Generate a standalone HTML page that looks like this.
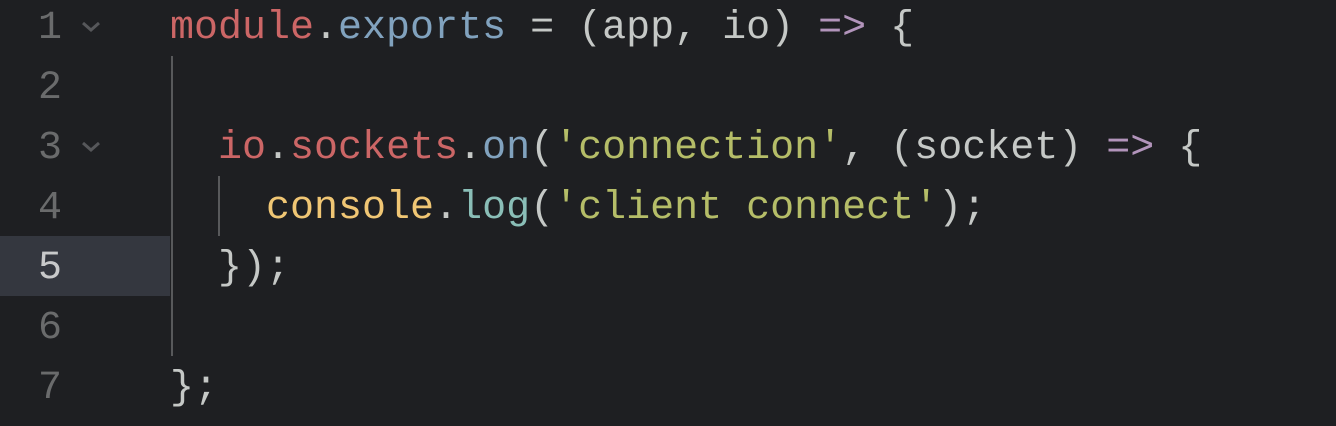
<!DOCTYPE html>
<html><head><meta charset="utf-8"><style>
html,body{margin:0;padding:0;width:1336px;height:426px;overflow:hidden;background:#1e1f22;}
body{position:relative;font-family:"Liberation Mono",monospace;font-size:40px;}
.ln{position:absolute;left:0;width:62px;text-align:right;color:#6a6b6c;line-height:60px;height:60px;}
.hl{position:absolute;left:0;top:236px;width:170px;height:60px;background:#34373f;}
.code{position:absolute;left:170px;white-space:pre;line-height:60px;color:#c5c8c6;}
.g{position:absolute;width:2px;background:#58595b;}
.fold{position:absolute;left:81px;width:20px;height:20px;}
.r{color:#cc6666}.b{color:#81a2be}.gr{color:#b5bd68}.y{color:#f0c674}.a{color:#8abeb7}.p{color:#b294bb}
</style></head><body>
<div class="hl"></div>
<div class="ln" style="top:-1px">1</div>
<div class="ln" style="top:59px">2</div>
<div class="ln" style="top:119px">3</div>
<div class="ln" style="top:179px">4</div>
<div class="ln" style="top:239px;color:#c8c9ca">5</div>
<div class="ln" style="top:299px">6</div>
<div class="ln" style="top:359px">7</div>
<svg class="fold" style="top:17px" viewBox="0 0 20 20"><path d="M2 6 L10 13 L18 6" fill="none" stroke="#56575a" stroke-width="3"/></svg>
<svg class="fold" style="top:137px" viewBox="0 0 20 20"><path d="M2 6 L10 13 L18 6" fill="none" stroke="#56575a" stroke-width="3"/></svg>
<div class="g" style="left:171px;top:56px;height:300px"></div>
<div class="g" style="left:218px;top:176px;height:60px"></div>
<div class="code" style="top:-1px"><span class="r">module</span>.<span class="b">exports</span> = (app, io) <span class="p">=&gt;</span> {</div>
<div class="code" style="top:119px">  <span class="r">io</span>.<span class="r">sockets</span>.<span class="b">on</span>(<span class="gr">'connection'</span>, (socket) <span class="p">=&gt;</span> {</div>
<div class="code" style="top:179px">    <span class="y">console</span>.<span class="a">log</span>(<span class="gr">'client connect'</span>);</div>
<div class="code" style="top:239px">  });</div>
<div class="code" style="top:359px">};</div>
</body></html>
